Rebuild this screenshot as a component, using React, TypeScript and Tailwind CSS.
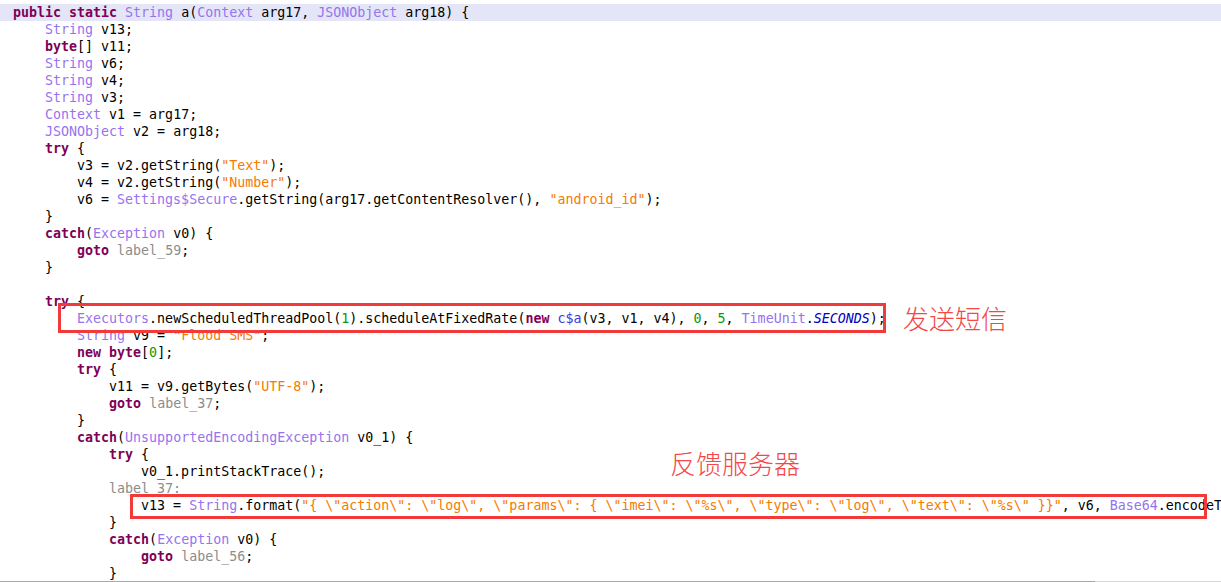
type Tok = [string, string]

const K = 'text-[#7f0055] font-bold'
const T = 'text-[#9673ef]'
const S = 'text-[#f57a00]'
const L = 'text-[#8c8c8c]'
const N = 'text-[#0b960b]'
const C = 'text-[#3b3bdb]'
const F = 'text-[#0000c0] italic'
const P = ''

const lines: { indent: number; toks: Tok[] }[] = [
  { indent: 0, toks: [[K, 'public static '], [T, 'String'], [P, ' a('], [T, 'Context'], [P, ' arg17, '], [T, 'JSONObject'], [P, ' arg18) {']] },
  { indent: 1, toks: [[T, 'String'], [P, ' v13;']] },
  { indent: 1, toks: [[K, 'byte'], [P, '[] v11;']] },
  { indent: 1, toks: [[T, 'String'], [P, ' v6;']] },
  { indent: 1, toks: [[T, 'String'], [P, ' v4;']] },
  { indent: 1, toks: [[T, 'String'], [P, ' v3;']] },
  { indent: 1, toks: [[T, 'Context'], [P, ' v1 = arg17;']] },
  { indent: 1, toks: [[T, 'JSONObject'], [P, ' v2 = arg18;']] },
  { indent: 1, toks: [[K, 'try'], [P, ' {']] },
  { indent: 2, toks: [[P, 'v3 = v2.getString('], [S, '"Text"'], [P, ');']] },
  { indent: 2, toks: [[P, 'v4 = v2.getString('], [S, '"Number"'], [P, ');']] },
  { indent: 2, toks: [[P, 'v6 = '], [T, 'Settings$Secure'], [P, '.getString(arg17.getContentResolver(), '], [S, '"android_id"'], [P, ');']] },
  { indent: 1, toks: [[P, '}']] },
  { indent: 1, toks: [[K, 'catch'], [P, '('], [T, 'Exception'], [P, ' v0) {']] },
  { indent: 2, toks: [[K, 'goto'], [P, ' '], [L, 'label_59'], [P, ';']] },
  { indent: 1, toks: [[P, '}']] },
  { indent: 0, toks: [] },
  { indent: 1, toks: [[K, 'try'], [P, ' {']] },
  { indent: 2, toks: [[T, 'Executors'], [P, '.newScheduledThreadPool('], [N, '1'], [P, ').scheduleAtFixedRate('], [K, 'new'], [P, ' '], [C, 'c$a'], [P, '(v3, v1, v4), '], [N, '0'], [P, ', '], [N, '5'], [P, ', '], [T, 'TimeUnit'], [P, '.'], [F, 'SECONDS'], [P, ');']] },
  { indent: 2, toks: [[T, 'String'], [P, ' v9 = '], [S, '"Flood SMS"'], [P, ';']] },
  { indent: 2, toks: [[K, 'new byte'], [P, '['], [N, '0'], [P, '];']] },
  { indent: 2, toks: [[K, 'try'], [P, ' {']] },
  { indent: 3, toks: [[P, 'v11 = v9.getBytes('], [S, '"UTF-8"'], [P, ');']] },
  { indent: 3, toks: [[K, 'goto'], [P, ' '], [L, 'label_37'], [P, ';']] },
  { indent: 2, toks: [[P, '}']] },
  { indent: 2, toks: [[K, 'catch'], [P, '('], [T, 'UnsupportedEncodingException'], [P, ' v0_1) {']] },
  { indent: 3, toks: [[K, 'try'], [P, ' {']] },
  { indent: 4, toks: [[P, 'v0_1.printStackTrace();']] },
  { indent: 3, toks: [[L, 'label_37:']] },
  { indent: 4, toks: [[P, 'v13 = '], [T, 'String'], [P, '.format('], [S, '"{ \\"action\\": \\"log\\", \\"params\\": { \\"imei\\": \\"%s\\", \\"type\\": \\"log\\", \\"text\\": \\"%s\\" }}"'], [P, ', v6, '], [T, 'Base64'], [P, '.encodeToString(v11, 2));']] },
  { indent: 3, toks: [[P, '}']] },
  { indent: 3, toks: [[K, 'catch'], [P, '('], [T, 'Exception'], [P, ' v0) {']] },
  { indent: 4, toks: [[K, 'goto'], [P, ' '], [L, 'label_56'], [P, ';']] },
  { indent: 3, toks: [[P, '}']] },
]

export default function App() {
  return (
    <div className="relative w-[1221px] h-[582px] overflow-hidden bg-white">
      <div className="pt-[4px] font-['DejaVu_Sans_Mono',monospace] text-[13.3px] leading-[17px] text-black">
        {lines.map((ln, i) => (
          <div
            key={i}
            className={`h-[17px] whitespace-pre pl-[13px] ${i === 0 ? 'bg-[#e4e6f8]' : ''}`}
          >
            {'    '.repeat(ln.indent)}
            {ln.toks.map(([cls, txt], j) => (
              <span key={j} className={cls}>
                {txt}
              </span>
            ))}
          </div>
        ))}
      </div>

      {/* annotations */}
      <div className="absolute left-[58px] top-[303px] w-[828px] h-[30px] border-[3px] border-[#f23a3a]" />
      <div className="absolute left-[903px] top-[302px] text-[26px] leading-[32px] text-[#f24848] font-light font-['Noto_Sans_CJK_SC',sans-serif]">
        发送短信
      </div>
      <div className="absolute left-[130px] top-[494px] w-[1077px] h-[25px] border-[3px] border-[#f23a3a]" />
      <div className="absolute left-[670px] top-[447px] text-[26px] leading-[32px] text-[#f24848] font-light font-['Noto_Sans_CJK_SC',sans-serif]">
        反馈服务器
      </div>

      <div className="absolute left-0 bottom-0 w-full h-px flex">
        <div className="w-[1095px] bg-[#a8a8a8]" />
        <div className="flex-1 bg-[#d8d8d8]" />
      </div>
    </div>
  )
}
